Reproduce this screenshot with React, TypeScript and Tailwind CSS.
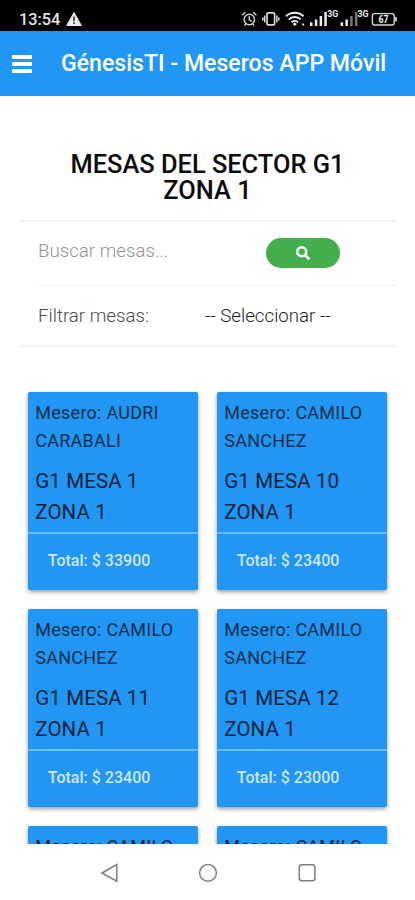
import React from "react";

type Mesa = { mesero: string[]; mesa: string; total: string };

const mesas: Mesa[] = [
  { mesero: ["Mesero: AUDRI", "CARABALI"], mesa: "G1 MESA 1", total: "33900" },
  { mesero: ["Mesero: CAMILO", "SANCHEZ"], mesa: "G1 MESA 10", total: "23400" },
  { mesero: ["Mesero: CAMILO", "SANCHEZ"], mesa: "G1 MESA 11", total: "23400" },
  { mesero: ["Mesero: CAMILO", "SANCHEZ"], mesa: "G1 MESA 12", total: "23000" },
];

const nextRow = ["Mesero: CAMILO", "Mesero: CAMILO"];

function StatusIcons() {
  return (
    <svg width="160" height="24" viewBox="240 7 160 24" fill="none" stroke="#d6d6d6" strokeWidth="1.4">
      <circle cx="249.3" cy="19.5" r="5.2" />
      <path d="M249.3 16.2v3.6l2.4 1.5M242.2 15.2l3.2-3M256.4 15.2l-3.2-3M245.8 24l-1.3 1.6M252.8 24l1.3 1.6" />
      <rect x="267" y="12.8" width="7.6" height="12" rx="1" strokeWidth="1.7" />
      <path d="M264.7 15.5v7M276.9 15.5v7M262.8 17.5v3M278.8 17.5v3" strokeWidth="1.5" />
      <g stroke="#efefef" strokeWidth="2">
        <path d="M286 16.2a12.5 12.5 0 0 1 17.5 0M288.8 19.4a8.4 8.4 0 0 1 11.9 0M291.5 22.4a4.6 4.6 0 0 1 6.5 0" />
      </g>
      <path d="M292.6 24l2.2-1.6 2.2 1.6-2.2 2z" fill="#efefef" stroke="none" />
      <rect x="302.2" y="23.5" width="2" height="2" fill="#efefef" stroke="none" />
      <g fill="#ededed" stroke="none">
        <rect x="310" y="22.3" width="2.5" height="3.7" />
        <rect x="314.8" y="19.5" width="2.5" height="6.5" />
        <rect x="319.6" y="16" width="2.5" height="10" />
        <rect x="324.3" y="12" width="2.5" height="14" />
        <rect x="340.6" y="22.3" width="2.5" height="3.7" />
        <rect x="345.4" y="19.5" width="2.5" height="6.5" />
        <rect x="350.2" y="16" width="2.5" height="10" fill="#777" />
        <rect x="354.9" y="12" width="2.5" height="14" fill="#777" />
        <text x="327.2" y="17.4" fontSize="9" fontWeight="700" fontFamily="Roboto, sans-serif" textLength="11" lengthAdjust="spacingAndGlyphs">3G</text>
        <text x="357.6" y="17.4" fontSize="9" fontWeight="700" fontFamily="Roboto, sans-serif" textLength="11" lengthAdjust="spacingAndGlyphs">3G</text>
        <text x="378.4" y="22.8" fontSize="10" fontWeight="700" fontFamily="Roboto, sans-serif" textLength="10" lengthAdjust="spacingAndGlyphs">67</text>
      </g>
      <rect x="372.4" y="13.6" width="21.8" height="11.4" rx="2.2" />
      <path d="M396 17v4.6" strokeWidth="1.8" />
    </svg>
  );
}

function Card({ mesero, mesa, total }: Mesa) {
  return (
    <div className="h-[198px] rounded-[2px] bg-[#2196f3] shadow-[0_2px_4px_rgba(0,0,0,0.4)]">
      <div className="h-[142px] border-b-2 border-[#6cbcfa] pl-[7px] pt-[7px] text-[#0d2e4c]">
        <div className="text-[18px] leading-[28px] tracking-[0.25px]">
          {mesero.map((line) => (
            <div key={line} className="whitespace-nowrap">{line}</div>
          ))}
        </div>
        <div className="mt-[11px] text-[20.5px] leading-[31px] tracking-[0.1px] text-[#0b2238]">
          <div>{mesa}</div>
          <div>ZONA 1</div>
        </div>
      </div>
      <div className="pl-[19.5px] pt-[14px] text-[16px] font-medium leading-[26px] text-[#cfe8fd]">
        Total: $ {total}
      </div>
    </div>
  );
}

export default function App() {
  return (
    <div className="flex h-[900px] w-[415px] flex-col overflow-hidden bg-white font-['Roboto',sans-serif]">
      <div className="flex h-[31px] shrink-0 items-start bg-black pt-[7px]">
        <span className="ml-[19px] mt-px w-[46px] text-[16.3px] font-medium leading-[24px] text-[#e4e4e4]">13:54</span>
        <svg className="mt-[4px]" width="18" height="16" viewBox="0 0 18 16">
          <path d="M9 1.5 16.3 14.5H1.7Z" fill="#ececec" stroke="#ececec" strokeLinejoin="round" />
          <path d="M9 5.5v4.7M9 11.3v1.7" stroke="#333" strokeWidth="1.6" />
        </svg>
        <div className="ml-[157px]"><StatusIcons /></div>
      </div>
      <header className="flex h-[65px] shrink-0 items-center bg-[#2196f3] text-white">
        <div className="ml-[12px] flex w-[49px] flex-col gap-[3px]">
          <span className="h-[4px] w-[20px] rounded-[1px] bg-white" />
          <span className="h-[4px] w-[20px] rounded-[1px] bg-white" />
          <span className="h-[4px] w-[20px] rounded-[1px] bg-white" />
        </div>
        <h1 className="whitespace-nowrap pt-px text-[23.1px] font-medium leading-[28px]">GénesisTI - Meseros APP Móvil</h1>
      </header>
      <main className="h-[748px] shrink-0 overflow-hidden">
        <h2 className="pt-[56px] text-center text-[25.4px] font-medium leading-[25.5px] text-[#0c0c0c]">
          MESAS DEL SECTOR G1
          <br />
          ZONA 1
        </h2>
        <section className="ml-[20px] mt-[17px] w-[376px] border-y-2 border-[#f5f5f5] pl-[18px]">
          <div className="flex h-[64px] border-b border-[#f0f0f0]">
            <span className="mt-[16px] w-[227.5px] text-[18.7px] font-light leading-[26px] text-[#929292]">Buscar mesas...</span>
            <button className="mt-[16px] flex h-[30px] w-[74px] items-center justify-center rounded-full bg-[#44ae4c]">
              <svg width="16" height="16" viewBox="0 0 16 16" fill="none" stroke="#fff" strokeWidth="2.4">
                <circle cx="6.7" cy="6.7" r="4.5" />
                <path d="m10 10 4.3 4.3" strokeWidth="2.8" />
              </svg>
            </button>
          </div>
          <div className="flex h-[59px] text-[18.7px] font-light leading-[26px]">
            <span className="mt-[17px] w-[167px] text-[#4a4a4a]">Filtrar mesas:</span>
            <span className="mt-[17px] text-[#1c1c1c]">-- Seleccionar --</span>
          </div>
        </section>
        <section className="ml-[28.3px] mt-[45px] grid w-[360px] grid-cols-[170px_170px] gap-x-[19px] gap-y-[19px]">
          {mesas.map((m) => <Card key={m.mesa} {...m} />)}
          {nextRow.map((line, i) => (
            <div key={i} className="h-[60px] rounded-t-[2px] bg-[#2196f3] pl-[7px] pt-[7px] text-[18px] leading-[28px] tracking-[0.25px] text-[#0b2238] shadow-[0_2px_4px_rgba(0,0,0,0.4)]">
              {line}
            </div>
          ))}
        </section>
      </main>
      <nav className="flex flex-1 justify-center bg-white pt-[19px]">
        <svg width="220" height="20" viewBox="98 863 220 20" fill="none" stroke="#7c7c7c" strokeWidth="1.5">
          <path d="M102 873 116.8 864.5V881.2Z" />
          <circle cx="208" cy="872.8" r="8.4" />
          <rect x="299.3" y="864.8" width="15.6" height="16" rx="2.5" />
        </svg>
      </nav>
    </div>
  );
}
